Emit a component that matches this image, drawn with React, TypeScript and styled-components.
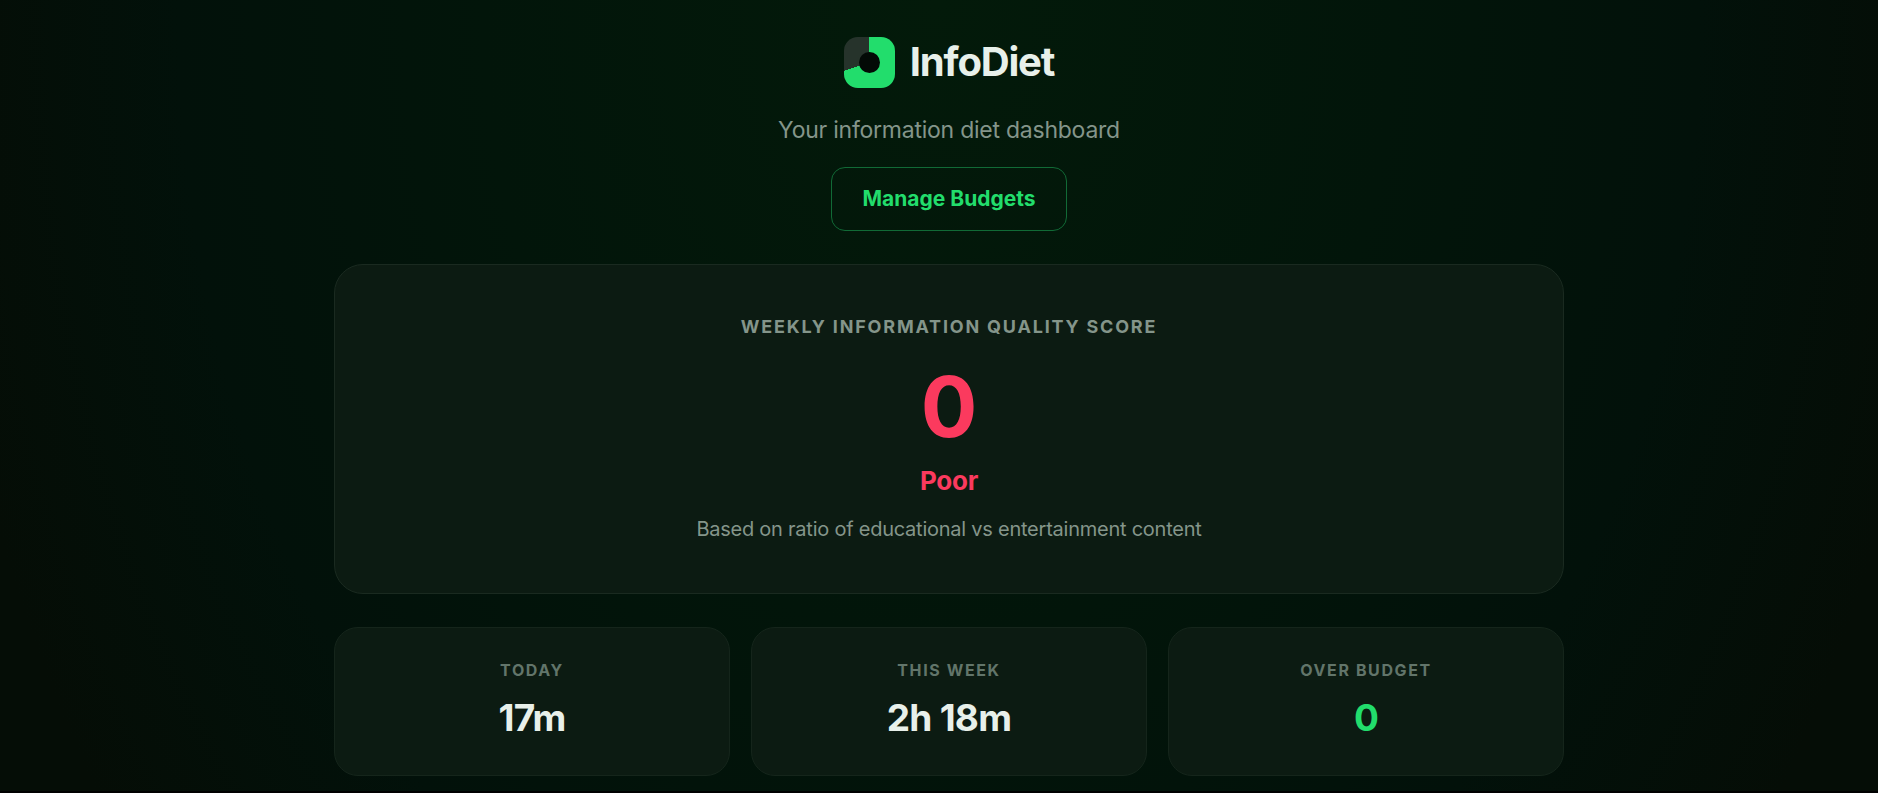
import React from "react";
import styled, { createGlobalStyle } from "styled-components";

const colors = {
  text: "#e8f0ea",
  muted: "#84958a",
  dim: "#62756a",
  green: "#22dd6c",
  red: "#fb3a5e",
};

const GlobalStyle = createGlobalStyle`
  * { box-sizing: border-box; }
  html { background: #000; }
  body {
    margin: 0;
    color: ${colors.text};
    font-family: Inter, "Liberation Sans", sans-serif;
    font-size: 24px;
    letter-spacing: -0.01em;
  }
  h1, h2, p, dl, dt, dd { margin: 0; }
`;

const Page = styled.div`
  padding: 37px 20px 15px 40px;
  border-bottom: 2px solid #000;
  background: radial-gradient(ellipse 54% 180% at 50% 0, #031a0a 0%, #02150a 45%, #02110a 75%, #050d06 100%);
`;

const Container = styled.main`
  display: flex;
  flex-direction: column;
  gap: 33px;
  max-width: 1230px;
  margin: 0 auto;
`;

const Header = styled.header`
  display: flex;
  flex-direction: column;
  align-items: center;
`;

const Brand = styled.div`
  display: flex;
  align-items: center;
  gap: 15px;
`;

const LogoMark = styled.div`
  display: grid;
  place-items: center;
  width: 51px;
  height: 51px;
  border-radius: 14px;
  background: conic-gradient(${colors.green} 0 70%, #26332b 70% 100%);

  &::after {
    content: "";
    width: 21px;
    height: 21px;
    border-radius: 50%;
    background: #030a06;
  }
`;

const Title = styled.h1`
  padding-bottom: 2px;
  font-size: 40px;
  line-height: 48px;
  font-weight: 700;
  letter-spacing: -0.03em;
`;

const Subtitle = styled.p`
  margin-top: 24px;
  color: ${colors.muted};
  font-size: 23px;
  line-height: 36px;
`;

const Button = styled.button`
  height: 64px;
  margin-top: 19px;
  padding: 0 30px;
  border: 1px solid #116a36;
  border-radius: 14px;
  background: transparent;
  color: ${colors.green};
  font: 700 21px/30px Inter, "Liberation Sans", sans-serif;
  cursor: pointer;
`;

const Card = styled.section`
  border: 1px solid #1a2a20;
  border-radius: 29px;
  background: #0c1b12;
  text-align: center;
`;

const ScoreCard = styled(Card)`
  padding: 47px 48px 49px;
`;

const ScoreHeading = styled.h2`
  color: ${colors.muted};
  font-size: 18px;
  line-height: 30px;
  font-weight: 700;
  letter-spacing: 0.1em;
  text-transform: uppercase;
`;

const Score = styled.p`
  margin-top: 22px;
  color: ${colors.red};
  font-size: 84px;
  line-height: 86px;
  font-weight: 700;
`;

const Rating = styled.p`
  margin-top: 11px;
  color: ${colors.red};
  font-size: 26px;
  line-height: 40px;
  font-weight: 700;
`;

const Note = styled.p`
  margin-top: 13px;
  color: ${colors.muted};
  font-size: 20px;
  line-height: 30px;
`;

const Stats = styled.dl`
  display: grid;
  grid-template-columns: repeat(3, 1fr);
  gap: 21px;
`;

const StatCard = styled(Card).attrs({ as: "div" })`
  padding: 27px 24px 29px;
  border-color: #15251b;
  border-radius: 24px;
`;

const StatLabel = styled.dt`
  color: ${colors.dim};
  font-size: 16px;
  line-height: 30px;
  font-weight: 700;
  letter-spacing: 0.1em;
  text-transform: uppercase;
`;

const StatValue = styled.dd<{ $good?: boolean }>`
  margin-top: 5px;
  color: ${(p) => (p.$good ? colors.green : colors.text)};
  font-size: 37px;
  line-height: 56px;
  font-weight: 700;
  letter-spacing: -0.02em;
`;

const stats = [
  { label: "Today", value: "17m" },
  { label: "This week", value: "2h 18m" },
  { label: "Over budget", value: "0", good: true },
];

export default function App() {
  return (
    <>
      <GlobalStyle />
      <Page>
        <Container>
          <Header>
            <Brand>
              <LogoMark aria-hidden="true" />
              <Title>InfoDiet</Title>
            </Brand>
            <Subtitle>Your information diet dashboard</Subtitle>
            <Button type="button">Manage Budgets</Button>
          </Header>
          <ScoreCard>
            <ScoreHeading>Weekly information quality score</ScoreHeading>
            <Score>0</Score>
            <Rating>Poor</Rating>
            <Note>Based on ratio of educational vs entertainment content</Note>
          </ScoreCard>
          <Stats>
            {stats.map((stat) => (
              <StatCard key={stat.label}>
                <StatLabel>{stat.label}</StatLabel>
                <StatValue $good={stat.good}>{stat.value}</StatValue>
              </StatCard>
            ))}
          </Stats>
        </Container>
      </Page>
    </>
  );
}
